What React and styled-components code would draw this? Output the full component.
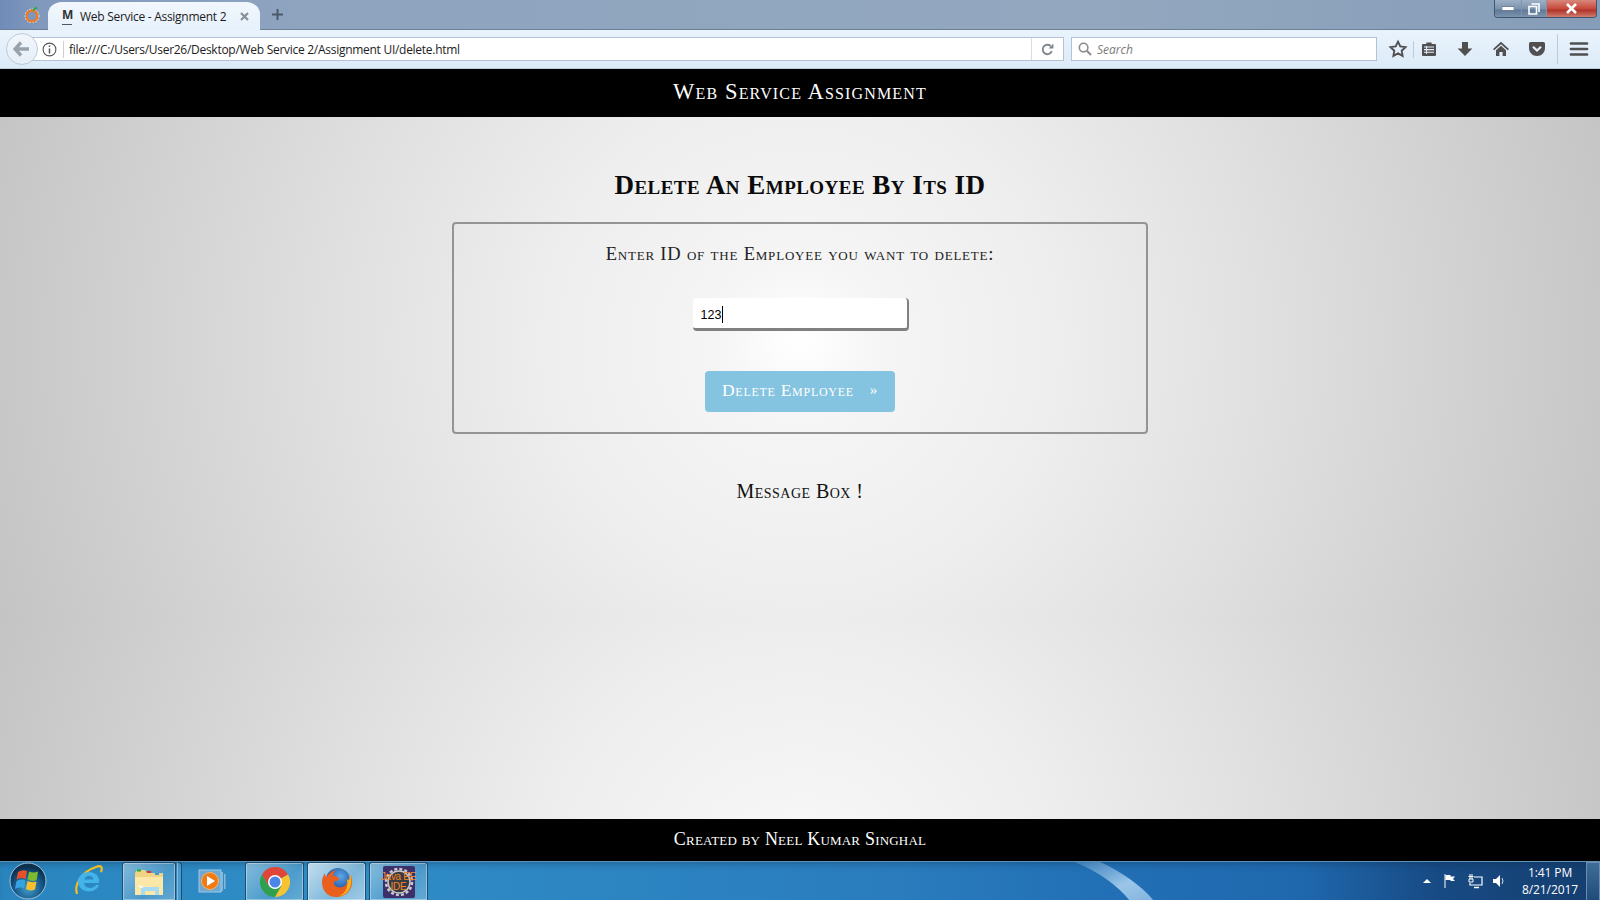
import React from "react";
import styled, { createGlobalStyle } from "styled-components";

const Global = createGlobalStyle`
  html, body { margin: 0; padding: 0; height: 100%; overflow: hidden; }
  #root { height: 100%; }
  * { box-sizing: border-box; }
`;

const Screen = styled.div`
  width: 1600px; height: 900px; display: flex; flex-direction: column; overflow: hidden;
  font-family: "Open Sans", "Liberation Sans", sans-serif;
`;

/* ---------- browser chrome ---------- */
const TabStrip = styled.div`
  height: 30px; flex: none; display: flex; align-items: flex-end; padding-left: 23px;
  background: linear-gradient(90deg, #6f8cb8 0, #8199bc 40px, #8ea4bf 300px, #93a8bf 1100px, #869db9 100%);
  border-bottom: 1px solid #6d8097;
`;
const AppBadge = styled.svg`width: 18px; height: 18px; margin: 0 7px 6px 0; flex: none;`;
const Tab = styled.div`
  width: 212px; height: 28px; margin-bottom: -1px; flex: none; display: flex; align-items: center;
  padding: 0 11px 0 14px; border-radius: 14px 14px 0 0 / 12px 12px 0 0;
  background: linear-gradient(#f2f7fd, #e6f1fb);
  color: #1c1c1c; font-size: 12px;
`;
const Favicon = styled.span`
  width: 10px; margin-right: 8px; flex: none; text-align: center; font-weight: 700; font-size: 12px; line-height: 13px;
  color: #333;
  &::after { content: ""; display: block; height: 1px; background: #555; margin-top: 3px; }
`;
const TabTitle = styled.span`flex: 1; white-space: nowrap; letter-spacing: -0.28px;`;
const TabClose = styled.svg`width: 9px; height: 9px; flex: none;`;
const NewTab = styled.svg`width: 11px; height: 11px; margin: 0 0 9px 12px; flex: none;`;
const WindowControls = styled.div`
  margin-left: auto; margin-right: 3px; align-self: flex-start; display: flex; height: 18px;
  border: 1px solid #41566e; border-top: 0; border-radius: 0 0 4px 4px; overflow: hidden;
`;
const WinButton = styled.div`
  width: ${p => p.$w}px; display: flex; align-items: center; justify-content: center;
  border-right: 1px solid #8095ad;
  background: ${p => p.$close
    ? "linear-gradient(#d8887c, #c84a3c 50%, #b03328 60%, #cf7d70)"
    : "linear-gradient(#9db0c6, #7d94ae 50%, #5f7a98 60%, #7c94ad)"};
  &:last-child { border-right: 0; }
`;

const Toolbar = styled.div`
  height: 39px; flex: none; display: flex; align-items: center; padding: 0 0 0 6px;
  background: linear-gradient(#e9f3fc, #dcebf8); border-bottom: 1px solid #b8cce0;
`;
const BackButton = styled.div`
  width: 32px; height: 32px; flex: none; border-radius: 50%; background: linear-gradient(#f1f6fb, #e6eef7);
  border: 1px solid #bccadb; display: flex; align-items: center; justify-content: center; z-index: 1;
`;
const UrlBar = styled.div`
  width: 1035px; height: 24px; margin-left: -9px; flex: none; display: flex; align-items: center; background: #fff;
  border: 1px solid #b3c3d5; border-left: 0; padding-left: 13px;
`;
const InfoIcon = styled.svg`width: 15px; height: 15px; flex: none;`;
const UrlDivider = styled.span`width: 1px; height: 17px; background: #c9d1da; margin: 0 5px 0 6px; flex: none;`;
const UrlText = styled.span`flex: 1; font-size: 12px; color: #1d1d1d; white-space: nowrap; letter-spacing: -0.28px;`;
const ReloadCell = styled.div`
  width: 32px; height: 100%; flex: none; display: flex; align-items: center; justify-content: center;
  border-left: 1px solid #d6dde5;
`;
const SearchBar = styled.div`
  width: 306px; height: 24px; margin-left: 7px; flex: none; display: flex; align-items: center; gap: 5px; padding-left: 6px;
  background: #fff; border: 1px solid #b3c3d5;
`;
const SearchHint = styled.span`font-size: 12px; font-style: italic; color: #7b7b7b;`;
const ToolIcons = styled.div`display: flex; align-items: center; height: 100%; margin-left: 11px; flex: 1;`;
const ToolIcon = styled.svg`width: 20px; height: 20px; flex: none; margin-left: ${p => p.$gap || 0}px;`;
const ToolSep = styled.span`width: 1px; height: ${p => p.$h}px; background: #bccbdb; margin-left: ${p => p.$gap}px; flex: none;`;

/* ---------- page ---------- */
const PageBar = styled.div`
  flex: none; height: ${p => p.$h}px; padding-bottom: 2px; background: #000; color: #fff; display: flex; align-items: center; justify-content: center;
  font-family: "Liberation Serif", "Times New Roman", serif; font-variant: small-caps;
  font-size: ${p => p.$size}px; letter-spacing: ${p => p.$ls}px; white-space: nowrap;
`;
const Main = styled.main`
  flex: 1; min-height: 0; display: flex; flex-direction: column; align-items: center; padding-top: 53px;
  background-image: radial-gradient(circle farthest-corner, #ffffff 0, #f5f5f5 10%, #eeeeee 30%, #e0e0e0 55%, #c4c4c4 100%);
  background-size: 100% 548px; background-position: 0 -48px; background-repeat: repeat-y;
  font-family: "Liberation Serif", "Times New Roman", serif; font-variant: small-caps; color: #111;
`;
const Title = styled.h1`
  margin: 0; font-size: 27px; line-height: 30px; font-weight: 700; letter-spacing: 0.47px; white-space: nowrap; color: #0a0a0a;
`;
const FormBox = styled.section`
  width: 696px; margin-top: 22px; border: 2px solid #949494; border-radius: 4px; padding: 19px 0 20px;
  display: flex; flex-direction: column; align-items: center;
`;
const Prompt = styled.label`
  font-size: 18.5px; line-height: 24px; letter-spacing: 0.8px; white-space: nowrap; color: #222; margin: -1px 0 1px;
`;
const IdField = styled.div`
  width: 216px; height: 33px; margin: 31px 0 0 1px; background: #fff; display: flex; align-items: center; padding: 3px 0 0 8px;
  border-right: 2px solid #808080; border-bottom: 3px solid #808080; border-radius: 4px;
  font: 12.5px "Liberation Sans", Arial, sans-serif; color: #000; font-variant: normal;
`;
const Caret = styled.span`width: 1px; height: 17px; background: #000; margin-left: 1px;`;
const DeleteButton = styled.button`
  width: 190px; height: 41px; margin-top: 40px; border: 0; border-radius: 4px; background: #85c4e0; color: #fff; padding: 0 17px 2px;
  display: flex; align-items: center; justify-content: space-between;
  font-family: inherit; font-variant: small-caps; font-size: 17.5px; letter-spacing: 0.72px;
`;
const Chevron = styled.span`font-size: 15px; font-variant: normal;`;
const Message = styled.p`margin: 45px 0 0; font-size: 20px; line-height: 24px; letter-spacing: 0.45px; white-space: nowrap;`;

/* ---------- taskbar ---------- */
const Taskbar = styled.footer`
  height: 39px; flex: none; display: flex; align-items: stretch; position: relative; overflow: hidden;
  background: linear-gradient(90deg, #2a85bf 0, #2f8dc6 330px, #2a7cbd 900px, #2270b6 1090px, #1f68ae 1300px, #174a83 1440px, #153e6f 100%);
  border-top: 1px solid #5f92b6;
  box-shadow: inset 0 6px 8px -6px rgba(10,40,70,.5);
`;
const Streak = styled.svg`position: absolute; left: 1060px; top: 0; width: 100px; height: 39px; pointer-events: none;`;
const TaskSlot = styled.div`
  flex: none; width: ${p => p.$w}px; margin-left: ${p => p.$gap || 0}px; padding-right: ${p => p.$shift || 0}px;
  display: flex; align-items: center; justify-content: center;
  ${p => p.$pinned ? `
    border: 1px solid #1d4f72; border-bottom: 0; border-radius: 3px 3px 0 0; box-shadow: inset 0 0 0 1px rgba(255,255,255,.35);
    background: linear-gradient(135deg, rgba(255,255,255,${p.$active ? .72 : .42}), rgba(255,255,255,${p.$active ? .38 : .14}) 60%, rgba(255,255,255,${p.$active ? .55 : .26}));
  ` : ""}
`;
const GroupEdge = styled.span`
  flex: none; width: 5px; margin-left: 1px; border: 1px solid #1d4f72; border-left-color: rgba(255,255,255,.35); border-bottom: 0;
  background: rgba(255,255,255,.15); border-radius: 0 3px 0 0;
`;
const JavaIcon = styled.div`
  width: 32px; height: 32px; border-radius: 2px; background: #3d2f6a; position: relative; display: flex; align-items: center; justify-content: center;
`;
const JavaGear = styled.svg`position: absolute; inset: 0; width: 32px; height: 32px;`;
const JavaLabel = styled.span`
  position: relative; color: #f58a1f; font: 10px/10px "Liberation Sans", Arial, sans-serif; text-align: center; white-space: nowrap; letter-spacing: -0.3px;
`;
const Tray = styled.div`margin-left: auto; display: flex; align-items: center; height: 100%;`;
const TrayIcon = styled.svg`width: 16px; height: 16px; flex: none; margin-left: ${p => p.$gap}px;`;
const Clock = styled.div`
  width: 60px; margin-left: 13px; text-align: center; color: #fff; font-size: 12px; line-height: 17px; white-space: nowrap;
  letter-spacing: -0.1px;
`;
const ShowDesktop = styled.div`
  width: 14px; height: 100%; margin-left: 6px; border: 1px solid #6c8eae; border-bottom: 0; background: linear-gradient(#3f6d99, #1f4b7a);
`;

const S = "#505050";

export default function App() {
  return (
    <Screen>
      <Global />
      <TabStrip>
        <AppBadge viewBox="0 0 18 18">
          <circle cx="9" cy="11" r="5.5" fill="none" stroke="#f07a22" strokeWidth="2.4" />
          <circle cx="9" cy="11" r="7" fill="none" stroke="#fff" strokeWidth="0.8" strokeDasharray="1.5 1.5" />
          <path d="M9 5 L13 1.5 L14.5 3 L11 6Z" fill="#3aa348" />
        </AppBadge>
        <Tab>
          <Favicon>M</Favicon>
          <TabTitle>Web Service - Assignment 2</TabTitle>
          <TabClose viewBox="0 0 9 9"><path d="M1 1l7 7M8 1L1 8" stroke="#8a8f96" strokeWidth="2.2" /></TabClose>
        </Tab>
        <NewTab viewBox="0 0 11 11"><path d="M5.5 0v11M0 5.5h11" stroke="#4d5a69" strokeWidth="2" /></NewTab>
        <WindowControls>
          <WinButton $w={27}>
            <svg width="12" height="5"><rect width="12" height="4" y="0.5" fill="#fff" stroke="#40566e" strokeWidth=".6" /></svg>
          </WinButton>
          <WinButton $w={25}>
            <svg width="12" height="12" viewBox="0 0 12 12"><path d="M3.5 1h7.5v8M1 3.500h7.500v7.500H1z" fill="none" stroke="#fff" strokeWidth="1.600" /></svg>
          </WinButton>
          <WinButton $w={49} $close>
            <svg width="13" height="11" viewBox="0 0 13 11"><path d="M2 1l9 9M11 1l-9 9" stroke="#fff" strokeWidth="2.600" /></svg>
          </WinButton>
        </WindowControls>
      </TabStrip>

      <Toolbar>
        <BackButton>
          <svg width="18" height="16" viewBox="0 0 18 16"><path d="M8 1.500L2 8l6 6.500M2.500 8H16" fill="none" stroke="#98a2ad" strokeWidth="3.400" /></svg>
        </BackButton>
        <UrlBar>
          <InfoIcon viewBox="0 0 15 15">
            <circle cx="7.500" cy="7.500" r="6.400" fill="none" stroke="#555" strokeWidth="1.100" />
            <path d="M7.500 3.400v1.600M7.500 6.400v5" stroke="#555" strokeWidth="1.500" />
          </InfoIcon>
          <UrlDivider />
          <UrlText>file:///C:/Users/User26/Desktop/Web Service 2/Assignment UI/delete.html</UrlText>
          <ReloadCell>
            <svg width="13" height="13" viewBox="0 0 13 13"><path d="M10.800 8.200A4.700 4.700 0 1 1 9.600 3" fill="none" stroke="#7d8790" strokeWidth="1.900" /><path d="M7.600 5.400h4.800V.6z" fill="#7d8790" /></svg>
          </ReloadCell>
        </UrlBar>
        <SearchBar>
          <svg width="14" height="14" viewBox="0 0 14 14"><circle cx="5.600" cy="5.600" r="4.300" fill="none" stroke="#8c8c8c" strokeWidth="1.600" /><path d="M8.800 8.800l4.200 4.200" stroke="#8c8c8c" strokeWidth="2" /></svg>
          <SearchHint>Search</SearchHint>
        </SearchBar>
        <ToolIcons>
          <ToolIcon viewBox="0 0 20 20"><path d="M10 2.600l2.300 4.800 5.200.7-3.800 3.600.9 5.200L10 14.400l-4.600 2.500.9-5.200-3.800-3.600 5.200-.7z" fill="none" stroke={S} strokeWidth="1.900" /></ToolIcon>
          <ToolSep $h={17} $gap={5} />
          <ToolIcon $gap={5} viewBox="0 0 20 20"><path d="M4 5h3.400V3.400h5.200V5H16a1 1 0 0 1 1 1v10a1 1 0 0 1-1 1H4a1 1 0 0 1-1-1V6a1 1 0 0 1 1-1z" fill={S} /><path d="M5 8h10M5 10.600h10M5 13.200h10" stroke="#e6f0fa" strokeWidth="1.100" /><path d="M7.600 7v8" stroke="#e6f0fa" strokeWidth="1" /></ToolIcon>
          <ToolIcon $gap={16} viewBox="0 0 20 20"><path d="M7 3h6v6.600h4.400L10 17 2.600 9.600H7z" fill={S} /></ToolIcon>
          <ToolIcon $gap={16} viewBox="0 0 20 20"><path d="M10 2.800L18 10l-1.200 1.200L10 5.200l-6.800 6L2 10z M10 6.800l5 4.400V17h-3.400v-4H8.400v4H5v-5.800z" fill={S} /></ToolIcon>
          <ToolIcon $gap={16} viewBox="0 0 20 20"><path d="M3.500 3h13A1.500 1.500 0 0 1 18 4.500V9c0 4.600-3.600 8-8 8s-8-3.400-8-8V4.500A1.500 1.500 0 0 1 3.500 3z" fill={S} /><path d="M6 7.800l4 3.800 4-3.800" fill="none" stroke="#e6f0fa" strokeWidth="2.200" /></ToolIcon>
          <ToolSep $h={30} $gap={10} />
          <ToolIcon $gap={11} viewBox="0 0 20 20"><path d="M2 4.500h16M2 10h16M2 15.500h16" stroke={S} strokeWidth="2.700" strokeLinecap="round" /></ToolIcon>
        </ToolIcons>
      </Toolbar>

      <PageBar $h={48} $size={22.5} $ls={1.15}>Web Service Assignment</PageBar>

      <Main>
        <Title>Delete An Employee By Its ID</Title>
        <FormBox>
          <Prompt>Enter ID of the Employee you want to delete:</Prompt>
          <IdField>123<Caret /></IdField>
          <DeleteButton>Delete Employee<Chevron>»</Chevron></DeleteButton>
        </FormBox>
        <Message>Message Box !</Message>
      </Main>

      <PageBar $h={42} $size={18} $ls={0.2}>Created by Neel Kumar Singhal</PageBar>

      <Taskbar>
        <Streak viewBox="0 0 100 39">
          <defs><linearGradient id="streak" x1="0" y1="0" x2="1" y2="1"><stop offset="0" stopColor="#8dbbe2" stopOpacity=".25" /><stop offset=".6" stopColor="#a9d0ef" stopOpacity=".9" /><stop offset="1" stopColor="#a9d0ef" stopOpacity=".7" /></linearGradient></defs>
          <path d="M40 0C62 10 82 24 94 39H70C58 24 40 10 14 0z" fill="url(#streak)" />
        </Streak>
        <TaskSlot $w={56}>
          <svg width="38" height="38" viewBox="0 0 38 38">
            <defs>
              <radialGradient id="orb" cx="50%" cy="70%" r="60%"><stop offset="0" stopColor="#3fa0cf" /><stop offset=".7" stopColor="#14507f" /><stop offset="1" stopColor="#0e2f4d" /></radialGradient>
            </defs>
            <circle cx="19" cy="19" r="18" fill="url(#orb)" stroke="#9cc4dc" strokeWidth="1" />
            <path d="M9 10q5-3 9-1l-1.400 8q-4-2-9 .5z" fill="#e8502a" />
            <path d="M20 9.500q4 2 9 0l-1.400 8.500q-4 2-9-.5z" fill="#7cbb2f" />
            <path d="M7.500 19q5-2.500 9-.5l-1.500 8q-4-2-9 .5z" fill="#35a3e0" />
            <path d="M18.500 19q4 2 9 .5l-1.500 8q-5 2-9-.5z" fill="#f8c02c" />
          </svg>
        </TaskSlot>
        <TaskSlot $w={64}>
          <svg width="32" height="34" viewBox="0 0 32 34">
            <path d="M5 30C2 21 9 8 24 3c5-2 7 0 5 5" fill="none" stroke="#f2bd1d" strokeWidth="2.200" />
            <path d="M17 8c7 0 11 5 10 11H12c.3 5 8 7 12 2h3c-3 9-20 9-21-3 0-6 5-10 11-10zm-4.500 7.500h9c-1-5-8-5-9 0z" fill="#44b4e8" fillRule="evenodd" />
          </svg>
        </TaskSlot>
        <TaskSlot $w={54} $pinned $gap={2}>
          <svg width="32" height="32" viewBox="0 0 32 32">
            <path d="M2 7l2-3h8l2 3h16v22H2z" fill="#f1d384" />
            <rect x="4" y="3.500" width="4" height="2" fill="#20b030" /><rect x="14" y="5" width="4" height="2" fill="#d33" /><rect x="22" y="7" width="4" height="2" fill="#3a9be0" />
            <path d="M2 11h28v18H2z" fill="#fbe7a8" />
            <path d="M8 29v-8h18v8h-4v-4H12v4z" fill="#a9dcf0" />
            <path d="M5 19l6 2-3 1z" fill="#fff" />
          </svg>
        </TaskSlot>
        <GroupEdge />
        <TaskSlot $w={63} $shift={6}>
          <svg width="30" height="30" viewBox="0 0 30 30">
            <rect x="3" y="4" width="22" height="22" fill="#6ea9d4" stroke="#9cc8e6" />
            <path d="M25 6h2v19h-2zM28 8h1.500v15H28z" fill="#88b8da" />
            <circle cx="14" cy="15" r="8.500" fill="#f07b14" stroke="#f9b26a" />
            <path d="M11 10l8 5-8 5z" fill="#fff" />
          </svg>
        </TaskSlot>
        <TaskSlot $w={59} $pinned>
          <svg width="30" height="30" viewBox="0 0 30 30">
            <path d="M15 15L28 7.500A15 15 0 0 0 2 7.500l6.500 11.300z" fill="#e0453a" />
            <path d="M15 15L8.500 18.800 2 7.500A15 15 0 0 0 15 30l6.500-11.200z" fill="#2fa14e" />
            <path d="M15 15L28 7.500A15 15 0 0 1 15 30l6.500-11.200z" fill="#f6c331" />
            <circle cx="15" cy="15" r="7" fill="#fff" /><circle cx="15" cy="15" r="5.500" fill="#4a86e8" />
          </svg>
        </TaskSlot>
        <TaskSlot $w={59} $gap={3} $pinned $active>
          <svg width="32" height="32" viewBox="0 0 32 32">
            <defs><radialGradient id="fxg" cx="60%" cy="35%" r="65%"><stop offset="0" stopColor="#5aa8ea" /><stop offset="1" stopColor="#1d4a96" /></radialGradient></defs>
            <circle cx="17" cy="14" r="12" fill="url(#fxg)" />
            <path d="M29 8c3 5 3 12-1 17-3 4-8 6-13 6C7 31 1 25 1 16c0-3 1-6 3-9 0 2 .5 3 1.500 4C8 7 11 5 15 4c-2 2-3 4-3 6 2-.5 6 1 6 3 0 1.500-3 2-5 2.500-1 3 2 6 6 6 5 0 8-4 8-9 .5 1 1 1.500 1.500 1.500.5-2 .5-4.500.5-6.500z" fill="#ea5f1e" />
            <path d="M29 8c2 5 2 12-2 17-2 3-6 5-10 5.500 5-2 8-5 9-10 .5-3 .5-5 0-7 1 .5 2 1 2 1 .5-2 1-4 1-6.500z" fill="#f7b51c" />
          </svg>
        </TaskSlot>
        <TaskSlot $w={59} $gap={3} $pinned>
          <JavaIcon>
            <JavaGear viewBox="0 0 32 32">
              <circle cx="16" cy="16" r="13" fill="none" stroke="#c9c9c9" strokeWidth="2.500" strokeDasharray="3 2.100" />
              <circle cx="16" cy="16" r="11" fill="#3a3a44" stroke="#c9c9c9" strokeWidth="1.500" />
            </JavaGear>
            <JavaLabel>Java EE<br />IDE</JavaLabel>
          </JavaIcon>
        </TaskSlot>
        <Tray>
          <TrayIcon $gap={0} viewBox="0 0 16 16"><path d="M4 10l4-4 4 4z" fill="#fff" /></TrayIcon>
          <TrayIcon $gap={7} viewBox="0 0 16 16"><path d="M3 1v14" stroke="#fff" /><path d="M3.500 2h5v1.500h4.500l-2 2.500 2 2H8.500V7h-5z" fill="#fff" /></TrayIcon>
          <TrayIcon $gap={9} viewBox="0 0 16 16"><path d="M5 1v5M3 1v5M1.500 3.500h5M2 6h4v3H2z" stroke="#fff" fill="none" /><path d="M7 4h8v8H3v-2" stroke="#fff" fill="none" strokeWidth="1.200" /><path d="M7 14.500h5" stroke="#fff" strokeWidth="1.500" /></TrayIcon>
          <TrayIcon $gap={8} viewBox="0 0 16 16"><path d="M2 6h3l4-4v12l-4-4H2z" fill="#fff" /><path d="M11 5q2 3 0 6" stroke="#fff" fill="none" strokeWidth=".8" /></TrayIcon>
          <Clock>1:41 PM<br />8/21/2017</Clock>
          <ShowDesktop />
        </Tray>
      </Taskbar>
    </Screen>
  );
}
